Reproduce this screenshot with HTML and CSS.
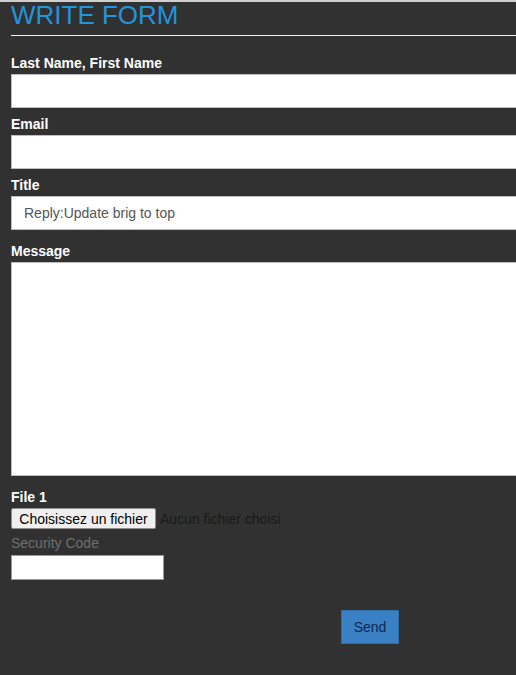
FILE: index.html
```html
<!DOCTYPE html>
<html lang="en">
  <head>
    <meta charset="UTF-8" />
    <meta name="viewport" content="width=device-width, initial-scale=1.0" />
    <title>Write Form</title>
    <link rel="stylesheet" href="styles.css">
  </head>
  <body>
    <div class="write-container">
      <h1 class="form-title">WRITE FORM</h1>

      <form class="write-form" onsubmit="return false;">
        <div class="form-group">
          <label for="name">Last Name, First Name</label>
          <input type="text" id="name" class="form-control" />
        </div>

        <div class="form-group">
          <label for="email">Email</label>
          <input type="text" id="email" class="form-control" />
        </div>

        <div class="form-group form-group-wide">
          <label for="title">Title</label>
          <input type="text" id="title" class="form-control" value="Reply:Update brig to top" />
        </div>

        <div class="form-group form-group-wide">
          <label for="message">Message</label>
          <textarea id="message" class="form-control message-box"></textarea>
        </div>

        <div class="form-group file-group">
          <label>File 1</label>
          <div class="file-row">
            <button type="button" class="file-button">Choisissez un fichier</button>
            <span class="file-name">Aucun fichier choisi</span>
          </div>
        </div>

        <div class="form-group security-group">
          <label for="code" class="security-label">Security Code</label>
          <input type="text" id="code" class="security-input" />
        </div>

        <div class="buttons">
          <button type="submit" class="send-button">Send</button>
        </div>
      </form>
    </div>
  </body>
</html>
```

FILE: styles.css
```css
html,
body {
  margin: 0;
  min-height: 100%;
  background: #313131;
  overflow-x: hidden;
}
body {
  font-family: "Liberation Sans", Arial, Helvetica, sans-serif;
  font-size: 14px;
  color: #fff;
  border-top: 2px solid #cfcfcf;
  min-height: 673px;
}
.write-container {
  width: 718px;
  padding-left: 11px;
}
.form-title {
  margin: 0;
  font-size: 26px;
  line-height: 26px;
  font-weight: 400;
  color: #2394dc;
  padding-bottom: 7px;
  border-bottom: 1px solid #f2f2f2;
}
.write-form {
  padding-top: 17px;
}
.form-group {
  margin-bottom: 6px;
}
.form-group-wide {
  margin-bottom: 11px;
}
.form-group label {
  display: block;
  font-weight: 700;
  line-height: 20px;
  margin-bottom: 1px;
}
.form-control {
  display: block;
  box-sizing: border-box;
  width: 100%;
  height: 34px;
  margin: 0;
  padding: 6px 12px;
  font-family: inherit;
  font-size: 14px;
  color: #555;
  background: #fff;
  border: 1px solid #bdbdbd;
  border-radius: 0;
  outline: none;
}
.message-box {
  height: 214px;
  resize: none;
}
.file-group {
  margin-bottom: 4px;
}
.file-row {
  display: flex;
  align-items: center;
  gap: 4px;
  height: 21px;
}
.file-button {
  box-sizing: border-box;
  width: 145px;
  height: 21px;
  margin: 0;
  padding: 0 4px;
  font-family: inherit;
  font-size: 14px;
  color: #000;
  background: #efefef;
  border: 1px solid #8f8f8f;
  border-radius: 2px;
  white-space: nowrap;
}
.file-name {
  font-size: 14px;
  color: #1a1a1a;
}
.security-group {
  margin-bottom: 0;
}
.form-group .security-label {
  font-weight: 400;
  color: #6e6e6e;
  margin-top: 2px;
  margin-bottom: 2px;
}
.security-input {
  display: block;
  box-sizing: border-box;
  width: 153px;
  height: 25px;
  margin: 0;
  padding: 1px 3px;
  background: #fff;
  border: 1px solid #9a9a9a;
  outline: none;
}
.buttons {
  display: flex;
  justify-content: center;
  padding-top: 30px;
}
.send-button {
  box-sizing: border-box;
  height: 34px;
  padding: 6px 12px;
  font-family: inherit;
  font-size: 14px;
  color: #10294d;
  background: #3a80c5;
  border: 1px solid #2e6da8;
  border-radius: 0;
  cursor: pointer;
}
```
